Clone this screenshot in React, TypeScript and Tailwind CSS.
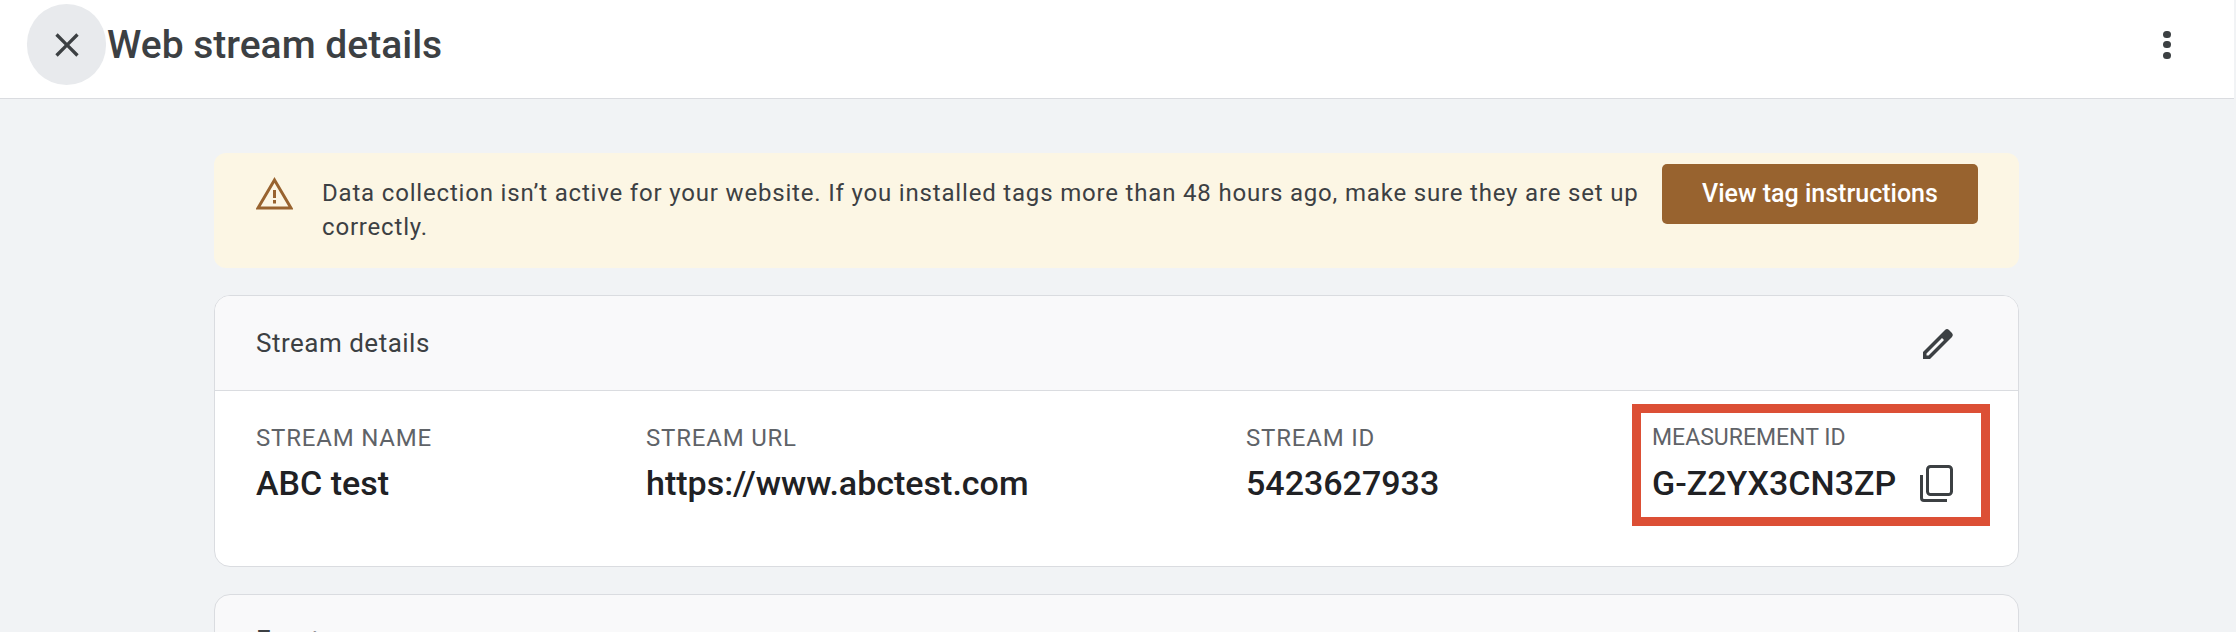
import React from 'react';

const sans = "font-['Roboto',sans-serif]";

const Field = ({ label, value, className }: { label: string; value: string; className: string }) => (
  <div className={className}>
    <div className="text-[24px] leading-[28px] tracking-[0.8px] text-[#5f6368]">{label}</div>
    <div className="mt-[11px] text-[34px] leading-[40px] font-medium text-[#202124]">{value}</div>
  </div>
);

const App = () => {
  return (
    <div className={`h-[632px] w-[2236px] overflow-hidden bg-[#f1f3f5] ${sans}`}>
      {/* Header */}
      <div className="mr-[2px] flex h-[99px] items-center border-b border-[#dadce0] bg-white pb-[9px] pl-[27px] pr-[63px]">
        <button className="flex h-[81px] w-[79px] items-center justify-center rounded-full bg-[#e8eaed] text-[#3c4043]">
          <svg width="40" height="40" viewBox="0 0 24 24" fill="currentColor">
            <path d="M19 6.41 17.59 5 12 10.59 6.41 5 5 6.41 10.59 12 5 17.59 6.41 19 12 13.41 17.59 19 19 17.59 13.41 12z" />
          </svg>
        </button>
        <h1 className="ml-px text-[39px] font-medium leading-[44px] text-[#3c4043]">Web stream details</h1>
        <div className="flex-1" />
        <div className="flex flex-col gap-[3.5px]">
          <span className="h-[7px] w-[8px] rounded-full bg-[#3c4043]" />
          <span className="h-[7px] w-[8px] rounded-full bg-[#3c4043]" />
          <span className="h-[7px] w-[8px] rounded-full bg-[#3c4043]" />
        </div>
      </div>

      <div className="pl-[214px] pr-[217px] pt-[54px]">
        {/* Warning banner */}
        <div className="flex h-[115px] rounded-[12px] bg-[#fcf6e4] pl-[42px] pr-[41px] pt-[11px]">
          <svg className="mt-[13px] shrink-0" width="37" height="33" viewBox="0 0 37 33" fill="none">
            <path d="M18.5 3 35 31H2z" stroke="#98632f" strokeWidth="3" />
            <rect x="17" y="13" width="3" height="8" fill="#98632f" />
            <rect x="17" y="23" width="3" height="3.5" fill="#98632f" />
          </svg>
          <p className="ml-[29px] mt-[12px] w-[1330px] text-[24px] leading-[34px] tracking-[0.82px] text-[#3c4043]">
            Data collection isn’t active for your website. If you installed tags more than 48 hours ago, make sure they are set up correctly.
          </p>
          <div className="flex-1" />
          <button className="flex h-[60px] w-[316px] items-center justify-center rounded-[5px] bg-[#98632f] text-[25px] font-medium text-white">
            View tag instructions
          </button>
        </div>

        {/* Stream details */}
        <div className="mt-[27px] h-[272px] overflow-hidden rounded-[16px] border border-[#dadce0] bg-white">
          <div className="flex h-[95px] items-center justify-between border-b border-[#dadce0] bg-[#f9f9fa] pl-[41px] pr-[64px]">
            <span className="text-[26px] tracking-[0.5px] text-[#3c4043]">Stream details</span>
            <svg width="31" height="31" viewBox="0 0 31 31" fill="#3c4043">
              <path
                fillRule="evenodd"
                d="M0 31V24L22 2a3 3 0 0 1 4 0l3 3a3 3 0 0 1 0 4L7 31zM3.5 27.5H5.5L21 12 19 10 3.5 25.5z"
              />
            </svg>
          </div>
          <div className="flex pl-[41px] pt-[13px]">
            <Field label="STREAM NAME" value="ABC test" className="w-[390px] pt-[20px]" />
            <Field label="STREAM URL" value="https://www.abctest.com" className="w-[600px] pt-[20px]" />
            <Field label="STREAM ID" value="5423627933" className="w-[386px] pt-[20px]" />
            {/* Red annotation box */}
            <div className="flex h-[122px] w-[358px] flex-col border-[9px] border-[#dc4f35] pl-[11px] pt-[11px]">
              <div className="text-[23px] leading-[28px] text-[#5f6368]">MEASUREMENT ID</div>
              <div className="mt-[11px] flex items-center text-[34px] leading-[40px] font-medium text-[#202124]">
                G-Z2YX3CN3ZP
                <svg className="ml-[24px]" width="33" height="37" viewBox="0 0 33 37" fill="none" stroke="#3c4043" strokeWidth="3">
                  <rect x="7.5" y="1.5" width="24" height="28" rx="3" />
                  <path d="M1.5 10V33a2.5 2.5 0 0 0 2.5 2.5H27" />
                </svg>
              </div>
            </div>
          </div>
        </div>

        {/* Next card, cut off by the window */}
        <div className="mt-[27px] h-[120px] rounded-[16px] border border-[#dadce0] bg-[#f9f9fa] pl-[41px] pt-[29px]">
          <span className="text-[26px] leading-[32px] text-[#3c4043]">Events</span>
        </div>
      </div>
    </div>
  );
};

export default App;
